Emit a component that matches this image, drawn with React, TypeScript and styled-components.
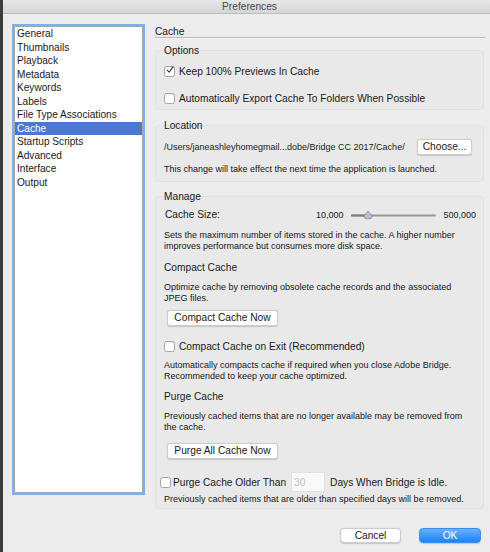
import React from 'react';
import styled, { createGlobalStyle } from 'styled-components';

const Global = createGlobalStyle`
  html, body { margin: 0; padding: 0; background: #ececec; }
  body { font-family: "Liberation Sans", Arial, sans-serif; -webkit-font-smoothing: antialiased; }
  * { box-sizing: border-box; }
`;

const Window = styled.div`
  width: 490px;
  height: 552px;
  border-left: 3px solid #3c3c3c;
  background: #ececec;
  display: flex;
  flex-direction: column;
  overflow: hidden;
  color: #1a1a1a;
`;

const TitleBar = styled.div`
  height: 14px;
  flex: none;
  background: linear-gradient(#e7e7e7, #d5d5d5);
  border-bottom: 1px solid #bdbdbd;
  display: flex;
  align-items: center;
  justify-content: center;
  padding-left: 6px;
  font-size: 10.2px;
  line-height: 13px;
  color: #4a4a4a;
`;

const Body = styled.div`
  display: flex;
  align-items: flex-start;
  padding: 12px 0 0 11px;
`;

const Sidebar = styled.ul`
  list-style: none;
  margin: 0;
  padding: 0;
  width: 129px;
  height: 467px;
  flex: none;
  background: #fff;
  border: 1px solid #a6a6a6;
  box-shadow: 0 0 0 2px #7cb0f2;
  font-size: 10.1px;
`;

const NavItem = styled.li<{ $active?: boolean }>`
  height: 13.5px;
  line-height: 13.5px;
  padding-left: 2px;
  white-space: nowrap;
  background: ${p => (p.$active ? '#4a78d2' : 'transparent')};
  color: ${p => (p.$active ? '#fff' : '#1a1a1a')};
`;

const Panel = styled.div`
  margin-left: 12px;
  width: 330px;
  display: flex;
  flex-direction: column;
`;

const Heading = styled.div`
  font-size: 10.2px;
  line-height: 11px;
  border-bottom: 1px solid #b9b9b9;
  box-shadow: 0 1px 0 #f7f7f7;
`;

const Group = styled.section<{ $mt: number; $pb: number }>`
  margin-top: ${p => p.$mt}px;
  width: 329px;
  background: #e9e9e9;
  border: 1px solid #e1e1e1;
  border-radius: 4px;
  padding: 0 7px ${p => p.$pb}px 7px;
  display: flex;
  flex-direction: column;
  align-items: flex-start;
`;

const GroupTitle = styled.div`
  font-size: 10.2px;
  line-height: 12px;
  margin-top: -6px;
  padding-left: 1px;
`;

const CheckRow = styled.label<{ $mt: number; $ml?: number; $gap?: number }>`
  display: flex;
  align-items: center;
  gap: ${p => p.$gap ?? 4}px;
  margin-top: ${p => p.$mt}px;
  margin-left: ${p => p.$ml ?? 1}px;
  height: 14px;
  font-size: 10.2px;
  white-space: nowrap;
`;

const Box = styled.span`
  width: 11px;
  height: 11px;
  flex: none;
  background: #fff;
  border: 1px solid #a3a3a3;
  border-radius: 2.5px;
  box-shadow: inset 0 1px 1px rgba(0, 0, 0, 0.06);
  display: flex;
  align-items: center;
  justify-content: center;
`;

const Check = ({ checked }: { checked?: boolean }) => (
  <Box>
    {checked && (
      <svg width="10" height="10" viewBox="0 0 10 10" style={{ marginTop: -2, marginLeft: 1 }}>
        <path d="M1.6 5.2 L4 7.8 L8.8 0.8" fill="none" stroke="#333" strokeWidth="1.3" strokeLinecap="round" strokeLinejoin="round" />
      </svg>
    )}
  </Box>
);

const Row = styled.div<{ $mt: number; $h: number }>`
  margin-top: ${p => p.$mt}px;
  height: ${p => p.$h}px;
  width: 100%;
  display: flex;
  align-items: center;
  justify-content: space-between;
  padding-left: 1px;
`;

const PathText = styled.span`
  font-size: 9px;
  white-space: nowrap;
`;

const Button = styled.button<{ $w: number; $ml?: number; $mr?: number; $mt?: number }>`
  width: ${p => p.$w}px;
  height: 16px;
  margin: ${p => p.$mt ?? 0}px ${p => p.$mr ?? 0}px 0 ${p => p.$ml ?? 0}px;
  padding: 0;
  flex: none;
  background: #fff;
  border: 0.5px solid #cdcdcd;
  border-radius: 3px;
  box-shadow: 0 0.5px 1px rgba(0, 0, 0, 0.16);
  font-family: inherit;
  font-size: 10.2px;
  line-height: 14px;
  color: #1a1a1a;
`;

const Desc = styled.p<{ $mt: number; $lh?: number }>`
  margin: ${p => p.$mt}px 0 0 1px;
  font-size: 9px;
  line-height: ${p => p.$lh ?? 11}px;
  color: #161616;
`;

const Label = styled.div<{ $mt: number }>`
  margin-top: ${p => p.$mt}px;
  padding-left: 1px;
  font-size: 10.2px;
  line-height: 14px;
`;

const SliderGroup = styled.div`
  display: flex;
  align-items: center;
  font-size: 9px;
`;

const SliderLabel = styled.span<{ $ml?: number; $mr?: number }>`
  margin-left: ${p => p.$ml ?? 0}px;
  margin-right: ${p => p.$mr ?? 0}px;
`;

const Slider = () => (
  <svg width="85" height="10" viewBox="0 0 85 10">
    <rect x="0" y="4.5" width="85" height="2" rx="1" fill="#9a9a9a" />
    <rect x="0" y="4.5" width="17" height="2" rx="1" fill="#7f7f7f" />
    <path d="M17 1.2 L21 6 Q21 8.6 19 8.6 L15 8.6 Q13 8.6 13 6 Z" fill="#b4c1d3" stroke="#7c8593" strokeWidth="0.8" strokeLinejoin="round" />
  </svg>
);

const PurgeRow = styled.div`
  margin-top: 13px;
  margin-left: -3px;
  height: 20px;
  display: flex;
  align-items: center;
  font-size: 10.2px;
  white-space: nowrap;
`;

const NumInput = styled.span`
  width: 34px;
  height: 20px;
  margin: 0 5px 0 5px;
  background: #f9f9f9;
  border: 0.5px solid #e2e2e2;
  color: #c2c2c2;
  font-size: 10.2px;
  line-height: 20px;
  padding-left: 2px;
`;

const Footer = styled.div`
  margin-top: 19px;
  padding-right: 4px;
  display: flex;
  justify-content: flex-end;
  gap: 18px;
`;

const FooterButton = styled.button<{ $primary?: boolean; $w: number }>`
  width: ${p => p.$w}px;
  height: 15px;
  padding: 0;
  border-radius: 4px;
  font-family: inherit;
  font-size: 10.2px;
  line-height: 13px;
  border: ${p => (p.$primary ? '0.5px solid #3a8cf6' : '0.5px solid #cdcdcd')};
  background: ${p => (p.$primary ? 'linear-gradient(#69b1fb, #1a82fb)' : '#fff')};
  color: ${p => (p.$primary ? '#fff' : '#1a1a1a')};
  box-shadow: 0 0.5px 1px rgba(0, 0, 0, 0.16);
`;

const items = [
  'General',
  'Thumbnails',
  'Playback',
  'Metadata',
  'Keywords',
  'Labels',
  'File Type Associations',
  'Cache',
  'Startup Scripts',
  'Advanced',
  'Interface',
  'Output',
];

export default function App() {
  return (
    <>
      <Global />
      <Window>
        <TitleBar>Preferences</TitleBar>
        <Body>
          <Sidebar>
            {items.map(i => (
              <NavItem key={i} $active={i === 'Cache'}>
                {i}
              </NavItem>
            ))}
          </Sidebar>
          <Panel>
            <Heading>Cache</Heading>

            <Group $mt={12} $pb={4}>
              <GroupTitle>Options</GroupTitle>
              <CheckRow $mt={7}>
                <Check checked />
                Keep 100% Previews In Cache
              </CheckRow>
              <CheckRow $mt={13}>
                <Check />
                Automatically Export Cache To Folders When Possible
              </CheckRow>
            </Group>

            <Group $mt={15} $pb={6}>
              <GroupTitle>Location</GroupTitle>
              <Row $mt={7} $h={16}>
                <PathText>/Users/janeashleyhomegmail...dobe/Bridge CC 2017/Cache/</PathText>
                <Button $w={55} $mr={4}>Choose...</Button>
              </Row>
              <Desc $mt={8} $lh={12}>
                This change will take effect the next time the application is launched.
              </Desc>
            </Group>

            <Group $mt={14} $pb={3}>
              <GroupTitle>Manage</GroupTitle>
              <Row $mt={5} $h={14}>
                <Label $mt={0}>Cache Size:</Label>
                <SliderGroup>
                  <SliderLabel $mr={8}>10,000</SliderLabel>
                  <Slider />
                  <SliderLabel $ml={7}>500,000</SliderLabel>
                </SliderGroup>
              </Row>
              <Desc $mt={8}>
                Sets the maximum number of items stored in the cache. A higher number
                <br />
                improves performance but consumes more disk space.
              </Desc>
              <Label $mt={9}>Compact Cache</Label>
              <Desc $mt={7}>
                Optimize cache by removing obsolete cache records and the associated
                <br />
                JPEG files.
              </Desc>
              <Button $w={111} $ml={4} $mt={6}>Compact Cache Now</Button>
              <CheckRow $mt={13}>
                <Check />
                Compact Cache on Exit (Recommended)
              </CheckRow>
              <Desc $mt={7}>
                Automatically compacts cache if required when you close Adobe Bridge.
                <br />
                Recommended to keep your cache optimized.
              </Desc>
              <Label $mt={8}>Purge Cache</Label>
              <Desc $mt={7}>
                Previously cached items that are no longer available may be removed from
                <br />
                the cache.
              </Desc>
              <Button $w={111} $ml={4} $mt={10}>Purge All Cache Now</Button>
              <PurgeRow>
                <Check />
                <SliderLabel $ml={2}>Purge Cache Older Than</SliderLabel>
                <NumInput>30</NumInput>
                Days When Bridge is Idle.
              </PurgeRow>
              <Desc $mt={2}>
                Previously cached items that are older than specified days will be removed.
              </Desc>
            </Group>

            <Footer>
              <FooterButton $w={61}>Cancel</FooterButton>
              <FooterButton $w={62} $primary>OK</FooterButton>
            </Footer>
          </Panel>
        </Body>
      </Window>
    </>
  );
}
